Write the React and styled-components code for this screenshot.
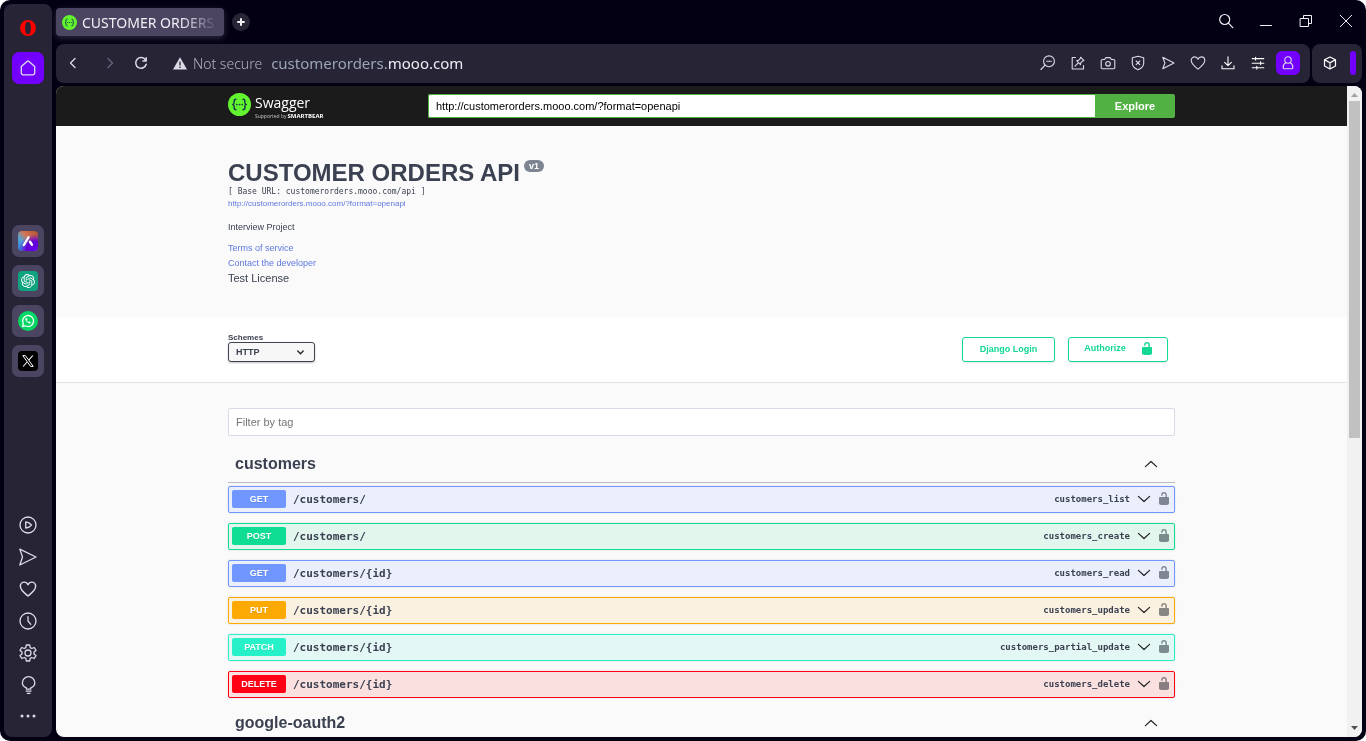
import React from "react";
import styled, { createGlobalStyle, css } from "styled-components";

const GlobalStyle = createGlobalStyle`
  *, *::before, *::after { box-sizing: border-box; }
  body { margin: 0; background: #fff; font-family: "Liberation Sans", Arial, sans-serif; color: #3b4151; }
  h1, h2, p, ul { margin: 0; padding: 0; }
  ul { list-style: none; }
  button { margin: 0; padding: 0; border: 0; background: none; font: inherit; color: inherit; cursor: pointer; }
  a { text-decoration: none; }
  svg { display: block; flex: none; }
`;

const chromeFont = `"Noto Sans", "Open Sans", sans-serif`;
const monoFont = `"DejaVu Sans Mono", "Liberation Mono", monospace`;

/* ---------- browser frame ---------- */
const Window = styled.div`
  display: flex;
  gap: 4px;
  height: 100vh;
  padding: 4px;
  background: #030013;
  border-radius: 10px;
  overflow: hidden;
`;

const Sidebar = styled.nav`
  display: flex;
  flex-direction: column;
  align-items: center;
  width: 48px;
  flex: none;
  padding: 8px 0 4px;
  border-radius: 8px;
  background: #272436;
  color: #dcdbe6;
`;

const SideButton = styled.button`
  display: grid;
  place-items: center;
  width: 32px;
  height: 32px;
  flex: none;
  border-radius: 7px;
  background: ${(p) => p.$fill || "transparent"};
`;

const SideTop = styled.div`
  display: grid;
  gap: 8px;
`;

const AppList = styled.div`
  display: grid;
  gap: 8px;
  margin-top: 141px;
`;

const SideTools = styled.div`
  display: grid;
  margin-top: auto;
`;

const Main = styled.div`
  display: flex;
  flex-direction: column;
  flex: 1;
  min-width: 0;
`;

const TabStrip = styled.header`
  display: flex;
  align-items: center;
  height: 36px;
  margin-bottom: 4px;
  flex: none;
  color: #f1f0f5;
`;

const Tab = styled.button`
  display: flex;
  align-items: center;
  gap: 5px;
  width: 168px;
  height: 28px;
  padding: 0 6px;
  border-radius: 4px;
  background: #4b4562;
  box-shadow: 0 2px 6px #4b456299;
  font-family: ${chromeFont};
  font-size: 14px;
`;

const TabTitle = styled.span`
  flex: 1;
  min-width: 0;
  white-space: nowrap;
  text-align: left;
  mask-image: linear-gradient(to right, #000 72%, transparent);
`;

const NewTab = styled.button`
  display: grid;
  place-items: center;
  width: 18px;
  height: 18px;
  margin-left: 8px;
  border-radius: 50%;
  background: #272436;
`;

const WindowControls = styled.div`
  display: flex;
  margin-left: auto;
  margin-right: -4px;
`;

const WindowButton = styled.button`
  display: grid;
  place-items: center;
  width: 40px;
  height: 36px;
  padding-bottom: 3px;
`;

const Bars = styled.div`
  display: flex;
  gap: 2px;
  height: 39px;
  margin-bottom: 3px;
  flex: none;
`;

const AddressBar = styled.div`
  display: flex;
  align-items: center;
  flex: 1;
  min-width: 0;
  padding: 0 10px 1px 5px;
  border-radius: 8px;
  background: #272436;
  color: #dcdbe6;
`;

const SidePanel = styled.div`
  display: flex;
  align-items: center;
  justify-content: space-between;
  width: 50px;
  padding: 0 6px 1px;
  border-radius: 8px;
  background: #272436;
  color: #fff;
`;

const PanelHandle = styled.span`
  width: 6px;
  height: 24px;
  border-radius: 3px;
  background: #7300ff;
`;

const ToolButton = styled.button`
  display: grid;
  place-items: center;
  width: 24px;
  height: 24px;
  border-radius: 6px;
  background: ${(p) => p.$fill || "transparent"};
  color: ${(p) => (p.$dim ? "#69667a" : "inherit")};
`;

const NavButtons = styled.div`
  display: grid;
  grid-template-columns: 24px 24px 24px;
  column-gap: 10px;
  margin-right: 20px;
`;

const Security = styled.span`
  display: flex;
  align-items: center;
  gap: 6px;
  margin-right: 9px;
  font-family: ${chromeFont};
  font-size: 14px;
  font-weight: 300;
  color: #b3b1bf;
`;

const Address = styled.span`
  font-family: ${chromeFont};
  font-size: 15px;
  color: #9aa5b5;
`;

const Host = styled.span`
  color: #eeedf3;
`;

const Tools = styled.div`
  display: flex;
  gap: 6px;
  margin-left: auto;
`;

/* ---------- page ---------- */
const Viewport = styled.div`
  display: flex;
  flex: 1;
  min-height: 0;
  border-radius: 8px;
  background: #fafafa;
  overflow: hidden;
`;

const Page = styled.div`
  flex: 1;
  min-width: 0;
  overflow: hidden;
`;

const ScrollTrack = styled.div`
  display: flex;
  flex-direction: column;
  align-items: center;
  width: 15px;
  padding: 6px 0;
  background: #f1f1f1;
`;

const ScrollThumb = styled.div`
  width: 11px;
  height: 337px;
  margin: 4px 0 auto;
  background: #c1c1c1;
`;

const Wrapper = styled.div`
  width: 100%;
  max-width: 973px;
  margin: 0 auto;
  padding: 0 13px;
`;

const Topbar = styled.div`
  background: #1b1b1b;
`;

const TopbarRow = styled(Wrapper)`
  display: flex;
  align-items: center;
  height: 40px;
`;

const Logo = styled.a`
  display: flex;
  gap: 4px;
  width: 200px;
  flex: none;
  color: #fff;
`;

const LogoText = styled.span`
  display: grid;
  align-content: start;
  font-family: "Open Sans", sans-serif;
  font-size: 14px;
  line-height: 20px;
`;

const LogoSub = styled.span`
  display: flex;
  gap: 1px;
  font-size: 5px;
  line-height: 6px;
  color: #c8c8c8;
  b { font-size: 6px; color: #fff; }
`;

const UrlForm = styled.form`
  display: flex;
  flex: 1;
  height: 24px;
`;

const UrlInput = styled.input`
  flex: 1;
  min-width: 0;
  padding: 0 7px;
  border: 1px solid #51b142;
  border-right: 0;
  border-radius: 2px 0 0 2px;
  background: #fff;
  font: 11px "Liberation Sans", Arial, sans-serif;
  color: #000;
  outline: 0;
`;

const ExploreButton = styled.button`
  width: 80px;
  border-radius: 0 2px 2px 0;
  background: #51b142;
  font-size: 11px;
  font-weight: 700;
  color: #fff;
`;

const Info = styled(Wrapper)`
  padding-top: 33px;
  padding-bottom: 31px;
`;

const Title = styled.h1`
  display: flex;
  align-items: flex-start;
  gap: 4px;
  margin-bottom: 1px;
  font-size: 24px;
  line-height: 27px;
`;

const Version = styled.span`
  margin-top: 1px;
  padding: 0 5px;
  border-radius: 6px;
  background: #7d8492;
  font-size: 9px;
  line-height: 12px;
  color: #fff;
`;

const BaseUrl = styled.p`
  margin-bottom: 2px;
  font: 8px/10px ${monoFont};
`;

const Link = styled.a`
  display: block;
  width: fit-content;
  color: #6078e0;
  font-size: ${(p) => (p.$small ? "8px" : "9px")};
  line-height: ${(p) => (p.$small ? "10px" : "15px")};
`;

const Description = styled.p`
  margin: 12px 0 8px;
  font-size: 9px;
  line-height: 12px;
`;

const License = styled.p`
  font-size: 11px;
  line-height: 15px;
`;

const SchemeSection = styled.section`
  background: #fff;
  border-bottom: 1px solid #e2e2e2;
`;

const SchemeRow = styled(Wrapper)`
  display: flex;
  align-items: flex-end;
  gap: 13px;
  padding-top: 16px;
  padding-bottom: 20px;
  padding-right: 20px;
`;

const SchemeLabel = styled.label`
  display: grid;
  margin-right: auto;
  font-size: 8px;
  line-height: 9px;
  font-weight: 700;
`;

const SelectBox = styled.span`
  display: grid;
  grid-template-columns: 1fr 28px;
  align-items: center;
  width: 87px;
  height: 20px;
  border: 1px solid #41444e;
  border-radius: 3px;
  background: #f7f7f7;
  box-shadow: 0 1px 2px rgba(0, 0, 0, 0.25);
`;

const Select = styled.select`
  grid-area: 1 / 1 / 2 / 3;
  height: 18px;
  padding: 0 7px;
  appearance: none;
  border: 0;
  background: transparent;
  font: 700 9px "Liberation Sans", Arial, sans-serif;
  color: #3b4151;
  outline: 0;
`;

const SelectArrow = styled.svg`
  grid-area: 1 / 2 / 2 / 3;
  justify-self: center;
  pointer-events: none;
`;

const OutlineButton = styled.button`
  display: flex;
  justify-content: center;
  gap: 16px;
  width: ${(p) => (p.$wide ? "100px" : "93px")};
  height: 25px;
  border: 1px solid #12d893;
  border-radius: 3px;
  box-shadow: 0 1px 2px rgba(0, 0, 0, 0.1);
  font-size: 9px;
  line-height: ${(p) => (p.$wide ? "20px" : "22px")};
  font-weight: 700;
  color: #12d893;
  svg { margin-top: 4px; }
`;

const Filter = styled.input`
  display: block;
  width: 100%;
  height: 28px;
  margin: 25px 0 10px;
  padding: 0 7px;
  border: 1px solid #d9d9e8;
  border-radius: 2px;
  background: #fff;
  font: 11px "Liberation Sans", Arial, sans-serif;
  outline: 0;
  &::placeholder { color: #757575; }
`;

const TagHeader = styled.button`
  display: flex;
  align-items: center;
  justify-content: space-between;
  width: 100%;
  height: 37px;
  padding: 0 17px 0 7px;
  border-bottom: 1px solid #bcbcc8;
`;

const TagName = styled.h2`
  font-size: 16px;
  line-height: 20px;
`;

const Operations = styled.ul`
  display: grid;
  gap: 10px;
  padding: 3px 0 7px;
`;

const methodColors = {
  GET: css`--line: #6f97ff; --tint: #ebeffb;`,
  POST: css`--line: #0edd93; --tint: #e2f6ee;`,
  PUT: css`--line: #fcaa03; --tint: #faf1e0;`,
  PATCH: css`--line: #27f1c9; --tint: #e3f8f5;`,
  DELETE: css`--line: #ff0015; --tint: #fbe0e0;`,
};

const Operation = styled.li`
  ${(p) => methodColors[p.$method]}
  display: flex;
  align-items: center;
  height: 27px;
  padding: 0 5px 1px 3px;
  border: 1px solid var(--line);
  border-radius: 2px;
  background: var(--tint);
  box-shadow: 0 0 2px rgba(0, 0, 0, 0.15);
`;

const OperationToggle = styled.button`
  display: flex;
  align-items: center;
  flex: 1;
  min-width: 0;
  gap: 7px;
  font-family: ${monoFont};
  font-weight: 700;
`;

const Method = styled.span`
  width: 54px;
  border-radius: 2px;
  background: var(--line);
  font: 700 9px/18px "Liberation Sans", Arial, sans-serif;
  text-align: center;
  text-shadow: 0 1px 0 rgba(0, 0, 0, 0.1);
  color: #fff;
`;

const Path = styled.span`
  flex: 1;
  text-align: left;
  font-size: 11px;
`;

const OperationId = styled.span`
  font-size: 9px;
`;

const LockButton = styled.button`
  margin-left: 8px;
  padding-bottom: 1px;
  color: #8b8f94;
  mix-blend-mode: multiply;
`;

/* ---------- icons ---------- */
function Icon({ size = 16, width = 1, children }) {
  return (
    <svg width={size} height={size} viewBox={`0 0 ${size} ${size}`} fill="none" stroke="currentColor" strokeWidth={width} strokeLinecap="round" strokeLinejoin="round" aria-hidden="true">
      {children}
    </svg>
  );
}

const SwaggerMark = ({ size }) => (
  <svg width={size} height={size} viewBox="0 0 24 24" aria-hidden="true">
    <circle cx="12" cy="12" r="12" fill="#62f52f" />
    <g fill="none" stroke="#173647" strokeWidth="1.5" strokeLinecap="round" strokeLinejoin="round">
      <path d="M8.3 6.6C6.7 6.6 6.4 7.3 6.4 8.5V10C6.4 11.3 5.9 12 4.9 12C5.9 12 6.4 12.7 6.4 14V15.5C6.4 16.7 6.7 17.4 8.3 17.4" />
      <path d="M15.7 6.6C17.3 6.6 17.6 7.3 17.6 8.5V10C17.6 11.3 18.1 12 19.1 12C18.1 12 17.6 12.7 17.6 14V15.5C17.6 16.7 17.3 17.4 15.7 17.4" />
    </g>
    <g fill="#173647"><circle cx="9.2" cy="12" r="0.9" /><circle cx="12" cy="12" r="0.9" /><circle cx="14.8" cy="12" r="0.9" /></g>
  </svg>
);

const Unlock = () => (
  <svg width="10" height="13" viewBox="3 1 14 18" fill="currentColor" aria-hidden="true">
    <path d="M15.8 8H14V5.6C14 2.7 12.67 1 10 1S6 2.7 6 5.6V6H8V5.2C8 3.75 8.8 3 10 3S12 3.75 12 5.2V8H4C3.45 8 3 8.65 3 9.2V17C3 17.55 3.43 18.14 3.95 18.3L5.15 18.7C5.67 18.86 6.55 19 7.1 19H12.9C13.45 19 14.33 18.86 14.85 18.7L16.05 18.3C16.57 18.14 17 17.55 17 17V9.2C17 8.65 16.35 8 15.8 8Z" />
  </svg>
);

const Chevron = ({ up }) => (
  <svg width="14" height="8" viewBox="0 0 14 8" fill="none" stroke="#222" strokeWidth="1.2" strokeLinecap="round" strokeLinejoin="round" aria-hidden="true">
    <path d={up ? "M1.4 6.6L7 1.5L12.6 6.6" : "M1.4 1.4L7 6.5L12.6 1.4"} />
  </svg>
);

const Heart = <path d="M8 14.2C5.6 12.2 1.2 9.2 1.2 5.6C1.2 3.4 2.8 1.9 4.7 1.9C6.2 1.9 7.4 2.8 8 4.2C8.6 2.8 9.8 1.9 11.3 1.9C13.2 1.9 14.8 3.4 14.8 5.6C14.8 9.2 10.4 12.2 8 14.2Z" />;

const apps = [
  {
    name: "Aria",
    art: (
      <svg width="20" height="20" viewBox="0 0 20 20">
        <defs>
          <linearGradient id="aria" x1="0" y1="1" x2="1" y2="0"><stop offset="0" stopColor="#2f75dc" /><stop offset="0.35" stopColor="#51a7d3" /><stop offset="0.6" stopColor="#d37352" /><stop offset="1" stopColor="#b3502f" /></linearGradient>
          <radialGradient id="ariaGlow" cx="0.85" cy="0.95" r="0.8"><stop offset="0" stopColor="#6400f2" /><stop offset="0.55" stopColor="#6500d4" /><stop offset="1" stopColor="#6500d4" stopOpacity="0" /></radialGradient>
        </defs>
        <rect width="20" height="20" rx="4" fill="url(#aria)" />
        <rect width="20" height="20" rx="4" fill="url(#ariaGlow)" />
        <path d="M5.8 14L10.6 6.2" stroke="#fff" strokeWidth="2.3" strokeLinecap="round" />
        <path d="M12 10.8L13.9 13.6" stroke="#fff" strokeWidth="2.5" strokeLinecap="round" />
      </svg>
    ),
  },
  {
    name: "ChatGPT",
    art: (
      <svg width="20" height="20" viewBox="0 0 20 20">
        <rect width="20" height="20" rx="4" fill="#10a37f" />
        <g transform="translate(3 3) scale(0.5833)" fill="#fff">
          <path d="M22.28 9.82a5.98 5.98 0 0 0-.52-4.91 6.05 6.05 0 0 0-6.51-2.9A6.07 6.07 0 0 0 4.98 4.18a5.98 5.98 0 0 0-4 2.9 6.05 6.05 0 0 0 .74 7.1 5.98 5.98 0 0 0 .51 4.91 6.05 6.05 0 0 0 6.52 2.9A5.98 5.98 0 0 0 13.26 24a6.06 6.06 0 0 0 5.77-4.21 5.99 5.99 0 0 0 4-2.9 6.06 6.06 0 0 0-.75-7.07zM13.26 22.43a4.48 4.48 0 0 1-2.88-1.04l.14-.08 4.78-2.76a.8.8 0 0 0 .39-.68v-6.74l2.02 1.17a.07.07 0 0 1 .04.05v5.58a4.5 4.5 0 0 1-4.49 4.5zM3.6 18.3a4.47 4.47 0 0 1-.54-3.01l.14.09 4.78 2.76a.77.77 0 0 0 .78 0l5.85-3.37v2.33a.08.08 0 0 1-.04.06L9.74 19.95A4.5 4.5 0 0 1 3.6 18.3zM2.34 7.9a4.49 4.49 0 0 1 2.37-1.98V11.6a.77.77 0 0 0 .38.68l5.82 3.35-2.02 1.17a.08.08 0 0 1-.07 0l-4.83-2.79A4.5 4.5 0 0 1 2.34 7.87zm16.6 3.85l-5.84-3.38L15.12 7.2a.08.08 0 0 1 .07 0l4.83 2.8a4.49 4.49 0 0 1-.68 8.1v-5.68a.79.79 0 0 0-.4-.67zm2.01-3.02l-.14-.09-4.77-2.78a.78.78 0 0 0-.79 0L9.41 9.23V6.9a.07.07 0 0 1 .03-.06l4.83-2.79a4.5 4.5 0 0 1 6.68 4.66zM8.31 12.86L6.29 11.7a.08.08 0 0 1-.04-.06V6.07a4.5 4.5 0 0 1 7.38-3.45l-.15.08-4.78 2.76a.8.8 0 0 0-.39.68zm1.1-2.36L12 9l2.61 1.5v3L12 15l-2.6-1.5z" />
        </g>
      </svg>
    ),
  },
  {
    name: "WhatsApp",
    art: (
      <svg width="20" height="20" viewBox="0 0 20 20" fill="none" stroke="#fff">
        <circle cx="10" cy="10" r="10" fill="#05d764" stroke="none" />
        <path d="M4.5 15.6L5.3 12.7A5.5 5.5 0 1 1 7.4 14.8Z" strokeWidth="1.3" strokeLinejoin="round" />
        <path d="M7.9 7.2C7.1 8 7.5 9.2 8.8 10.6C10.3 12.1 11.5 12.8 12.5 12L12.7 11.2L11.4 10.5L10.7 11.2C9.9 10.9 9.2 10.2 8.7 9.3L9.3 8.6L8.7 7.2Z" fill="#fff" strokeWidth="0.3" />
      </svg>
    ),
  },
  {
    name: "X",
    art: (
      <svg width="20" height="20" viewBox="0 0 20 20">
        <rect width="20" height="20" rx="4" fill="#000" />
        <path d="M4.8 4.6H7.4L15.2 15.4H12.6Z" fill="none" stroke="#fff" strokeWidth="1" />
        <path d="M14.8 4.5L10.7 9.2M9.1 11L5.1 15.5" stroke="#fff" strokeWidth="1.1" />
      </svg>
    ),
  },
];

const sideTools = [
  { name: "Player", art: <><circle cx="9" cy="9" r="8" /><path d="M6.7 5.9V12.1C9 11.8 11.2 10.6 12.5 9C11.2 7.4 9 6.2 6.7 5.9Z" /></> },
  { name: "Flow", art: <path d="M.8 1.1L17 9L.8 17L3.5 9Z" /> },
  { name: "Bookmarks", art: <g transform="scale(1.125)">{Heart}</g> },
  { name: "History", art: <><circle cx="9" cy="9" r="8" /><path d="M9 4.7V9L11.8 12.3" /></> },
  {
    name: "Settings",
    art: (
      <>
        <path d="M7.3 1H10.7L11.2 3.6L12.8 4.5L15.2 3.5L17 6.4L15 8V10L17 11.6L15.2 14.5L12.8 13.5L11.2 14.4L10.7 17H7.3L6.8 14.4L5.2 13.5L2.8 14.5L1 11.6L3 10V8L1 6.4L2.8 3.5L5.2 4.5L6.8 3.6Z" />
        <circle cx="9" cy="9" r="3" />
      </>
    ),
  },
  { name: "Tips", art: <path d="M7.4 13.2V11.9C5 11.1 3.4 9.2 3.4 6.8C3.4 3.3 6.2.7 9.6.7C13 .7 15.8 3.3 15.8 6.8C15.8 9.2 14.2 11.1 11.8 11.9V13.2ZM7.2 15.2H12M8.3 17.3H11" /> },
  { name: "More", art: <g fill="currentColor" stroke="none"><circle cx="3" cy="8" r="1.5" /><circle cx="9" cy="8" r="1.5" /><circle cx="15" cy="8" r="1.5" /></g> },
];

const tools = [
  { name: "Zoom", art: <><circle cx="9" cy="6.3" r="5.4" /><path d="M5.1 10.2L.9 14.5M6.7 6.3H11.3" /></> },
  { name: "Edit page", art: <path d="M5.5 2.5H2.2V14H13.5V10.5M5 11.2L7.8 8.4M10.6 2.2L14 5.6L12.4 6.1L10.8 7.8L10.5 9.6L6.6 5.7L8.4 5.4L10.1 3.8Z" /> },
  { name: "Snapshot", art: <><path d="M2.4 4.5H4.6L5.9 2.6H10.1L11.4 4.5H13.6Q14.8 4.5 14.8 5.7V12.5Q14.8 13.7 13.6 13.7H2.4Q1.2 13.7 1.2 12.5V5.7Q1.2 4.5 2.4 4.5Z" /><circle cx="8" cy="8.8" r="2.3" /></> },
  { name: "Blocker", art: <path d="M8 1.2L13.7 2.7V8.2C13.7 11.3 11.1 13.5 8 14.8C4.9 13.5 2.3 11.3 2.3 8.2V2.7ZM6.2 6L9.8 9.6M9.8 6L6.2 9.6" /> },
  { name: "Send", art: <path d="M2.8 2.2L14 8L2.8 13.8L4.9 8Z" /> },
  { name: "Favourite", art: Heart },
  { name: "Downloads", art: <path stroke="#fff" d="M8 1.8V10.4M4.6 7.3L8 10.6L11.4 7.3M2 10.7V13.8H14V10.7" /> },
  { name: "Easy setup", art: <path stroke="#fff" d="M2.2 3.6H13.8M2.2 8.2H13.8M2.2 12.7H13.8M5.6 2.2V5M10.6 6.8V9.6M6.8 11.3V14.1" /> },
];

const operations = [
  ["GET", "/customers/", "customers_list"],
  ["POST", "/customers/", "customers_create"],
  ["GET", "/customers/{id}", "customers_read"],
  ["PUT", "/customers/{id}", "customers_update"],
  ["PATCH", "/customers/{id}", "customers_partial_update"],
  ["DELETE", "/customers/{id}", "customers_delete"],
];

function BrowserSidebar() {
  return (
    <Sidebar aria-label="Browser sidebar">
      <SideTop>
        <SideButton aria-label="Opera menu">
          <svg width="16" height="16" viewBox="0 0 16 16"><path fillRule="evenodd" fill="#ff0000" d="M8 0C12.4 0 15.8 3.5 15.8 8S12.4 16 8 16S.2 12.5.2 8S3.6 0 8 0ZM8 1.7C6 1.7 5.1 4.7 5.1 8S6 14.3 8 14.3S10.9 11.3 10.9 8S10 1.7 8 1.7Z" /></svg>
        </SideButton>
        <SideButton $fill="#7300ff" aria-label="Home">
          <Icon width={1.3}><path d="M1.3 6.6L7 1.4Q8 .6 9 1.4L14.7 6.6V13Q14.7 14.8 12.9 14.8H3.1Q1.3 14.8 1.3 13Z" /></Icon>
        </SideButton>
      </SideTop>
      <AppList>
        {apps.map((a) => <SideButton key={a.name} $fill="#4b4562" aria-label={a.name}>{a.art}</SideButton>)}
      </AppList>
      <SideTools>
        {sideTools.map((t) => <SideButton key={t.name} aria-label={t.name}><Icon size={18} width={1.3}>{t.art}</Icon></SideButton>)}
      </SideTools>
    </Sidebar>
  );
}

function BrowserHeader() {
  return (
    <>
      <TabStrip>
        <Tab><SwaggerMark size={15} /><TabTitle>CUSTOMER ORDERS</TabTitle></Tab>
        <NewTab aria-label="New tab"><Icon size={8} width={2}><path d="M4 1V7M1 4H7" /></Icon></NewTab>
        <WindowControls>
          <WindowButton aria-label="Search tabs"><Icon width={1.2}><circle cx="6.7" cy="6.5" r="5" /><path d="M10.4 10.2L14.8 14.6" /></Icon></WindowButton>
          <WindowButton aria-label="Minimise"><Icon><path d="M2.5 12.5H13.5" /></Icon></WindowButton>
          <WindowButton aria-label="Restore"><Icon><path d="M2.5 5.5H10.5V13.5H2.5ZM5.5 5.5V2.5H13.5V10.5H10.5" /></Icon></WindowButton>
          <WindowButton aria-label="Close"><Icon><path d="M2.3 2.3L13.7 13.7M13.7 2.3L2.3 13.7" /></Icon></WindowButton>
        </WindowControls>
      </TabStrip>
      <Bars>
        <AddressBar>
          <NavButtons>
            <ToolButton aria-label="Back"><Icon width={1.3}><path d="M10 3.5L5.5 8L10 12.5" /></Icon></ToolButton>
            <ToolButton $dim aria-label="Forward"><Icon width={1.3}><path d="M9 3.5L13.5 8L9 12.5" /></Icon></ToolButton>
            <ToolButton aria-label="Reload"><Icon width={1.5}><path d="M12.5 5A5.3 5.3 0 1 0 13.2 9.2M13.2 2.7V6H9.9" /></Icon></ToolButton>
          </NavButtons>
          <Security>
            <svg width="14" height="13" viewBox="0 0 14 13"><path d="M7 .3L14 12.6H0Z" fill="#dcdbe6" /><path d="M7 4.5V8.4M7 9.6V11" stroke="#272436" strokeWidth="1.3" /></svg>
            Not secure
          </Security>
          <Address>customerorders.<Host>mooo.com</Host></Address>
          <Tools>
            {tools.map((t) => <ToolButton key={t.name} aria-label={t.name}><Icon width={1.1}>{t.art}</Icon></ToolButton>)}
            <ToolButton $fill="#7300ff" aria-label="Profile"><Icon width={1.1}><circle cx="8" cy="5" r="3.2" /><path d="M6 7.5C4 8.5 3.1 10.3 3.1 12.6Q3.1 13.8 4.3 13.8H11.7Q12.9 13.8 12.9 12.6C12.9 10.3 12 8.5 10 7.5" /></Icon></ToolButton>
          </Tools>
        </AddressBar>
        <SidePanel>
          <ToolButton aria-label="Extensions"><Icon width={1.2}><path d="M8 2L13.5 4.7V11L8 14L2.5 11V4.7ZM2.7 4.9L8 7.7L13.3 4.9M8 7.7V13.8" /></Icon></ToolButton>
          <PanelHandle />
        </SidePanel>
      </Bars>
    </>
  );
}

function TagSection({ name, children }) {
  return (
    <section>
      <TagHeader><TagName>{name}</TagName><Chevron up /></TagHeader>
      {children}
    </section>
  );
}

export default function App() {
  return (
    <>
      <GlobalStyle />
      <Window>
        <BrowserSidebar />
        <Main>
          <BrowserHeader />
          <Viewport>
            <Page>
              <Topbar>
                <TopbarRow>
                  <Logo href="#">
                    <SwaggerMark size={23} />
                    <LogoText>Swagger<LogoSub>Supported by <b>SMARTBEAR</b></LogoSub></LogoText>
                  </Logo>
                  <UrlForm onSubmit={(e) => e.preventDefault()}>
                    <UrlInput aria-label="Specification address" defaultValue="http://customerorders.mooo.com/?format=openapi" />
                    <ExploreButton type="submit">Explore</ExploreButton>
                  </UrlForm>
                </TopbarRow>
              </Topbar>
              <Info as="header">
                <Title>CUSTOMER ORDERS API<Version>v1</Version></Title>
                <BaseUrl>[ Base URL: customerorders.mooo.com/api ]</BaseUrl>
                <Link $small href="#">http://customerorders.mooo.com/?format=openapi</Link>
                <Description>Interview Project</Description>
                <Link href="#">Terms of service</Link>
                <Link href="#">Contact the developer</Link>
                <License>Test License</License>
              </Info>
              <SchemeSection>
                <SchemeRow>
                  <SchemeLabel htmlFor="scheme">
                    Schemes
                    <SelectBox>
                      <Select id="scheme"><option>HTTP</option></Select>
                      <SelectArrow width="7" height="5" viewBox="0 0 7 5" fill="none" stroke="#222" strokeWidth="1.3" strokeLinecap="round"><path d="M.8 1L3.5 3.8L6.2 1" /></SelectArrow>
                    </SelectBox>
                  </SchemeLabel>
                  <OutlineButton>Django Login</OutlineButton>
                  <OutlineButton $wide>Authorize<Unlock /></OutlineButton>
                </SchemeRow>
              </SchemeSection>
              <Wrapper as="main">
                <Filter aria-label="Filter by tag" placeholder="Filter by tag" />
                <TagSection name="customers">
                  <Operations>
                    {operations.map(([method, path, id]) => (
                      <Operation key={id} $method={method}>
                        <OperationToggle>
                          <Method>{method}</Method>
                          <Path>{path}</Path>
                          <OperationId>{id}</OperationId>
                          <Chevron />
                        </OperationToggle>
                        <LockButton aria-label={`Authorize ${id}`}><Unlock /></LockButton>
                      </Operation>
                    ))}
                  </Operations>
                </TagSection>
                <TagSection name="google-oauth2" />
              </Wrapper>
            </Page>
            <ScrollTrack aria-hidden="true">
              <svg width="7" height="5" viewBox="0 0 7 5"><path d="M0 5L3.5 1L7 5Z" fill="#a3a3a3" /></svg>
              <ScrollThumb />
              <svg width="7" height="5" viewBox="0 0 7 5"><path d="M0 0L3.5 4L7 0Z" fill="#505050" /></svg>
            </ScrollTrack>
          </Viewport>
        </Main>
      </Window>
    </>
  );
}
